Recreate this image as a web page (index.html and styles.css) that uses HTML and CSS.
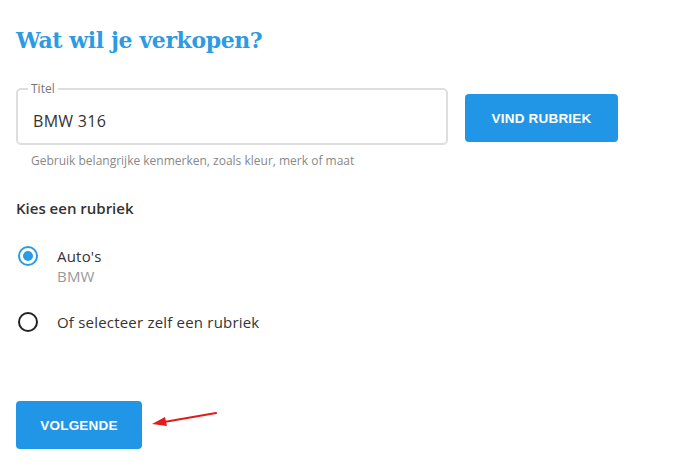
FILE: index.html
```html
<!DOCTYPE html>
<html lang="nl">
<head>
    <meta charset="UTF-8">
    <meta name="viewport" content="width=device-width, initial-scale=1.0">
    <title>Wat wil je verkopen?</title>
    <link rel="stylesheet" href="styles.css">
</head>
<body>
    <h1 class="titel">Wat wil je verkopen?</h1>

    <!-- Titel van de advertentie -->
    <div class="zoek-rij">
        <div class="veld">
            <fieldset class="kader">
                <legend>Titel</legend>
                <input type="text" id="titel" value="BMW 316">
            </fieldset>
            <p class="hint">Gebruik belangrijke kenmerken, zoals kleur, merk of maat</p>
        </div>
        <button class="knop knop-vind" type="button">VIND RUBRIEK</button>
    </div>

    <h2 class="subkop">Kies een rubriek</h2>

    <label class="keuze">
        <span class="rondje actief"></span>
        <span class="keuze-tekst">Auto's<span class="sub">BMW</span></span>
    </label>

    <label class="keuze keuze-tweede">
        <span class="rondje"></span>
        <span class="keuze-tekst">Of selecteer zelf een rubriek</span>
    </label>

    <div class="voet">
        <button class="knop knop-volgende" type="button">VOLGENDE</button>
        <!-- rode pijl naar de knop -->
        <svg class="pijl" width="70" height="24" viewBox="0 0 70 24">
            <line x1="66" y1="3" x2="14" y2="12" stroke="#e21c1c" stroke-width="2.2" stroke-linecap="round"/>
            <polygon points="2,14 15,7 17,16" fill="#e21c1c"/>
        </svg>
    </div>
</body>
</html>
```

FILE: styles.css
```css
body {
    margin: 0;
    padding: 0 16px;
    font-family: 'Open Sans', 'Noto Sans', sans-serif;
    color: #333;
    background: #fff;
}

.titel {
    margin: 27px 0 0;
    font-family: 'DejaVu Serif', serif;
    font-size: 22px;
    font-weight: bold;
    color: #2d9be3;
    letter-spacing: -0.4px;
}

.zoek-rij {
    display: flex;
    align-items: flex-start;
    margin-top: 30px;
}

.veld {
    width: 432px;
}

.kader {
    margin: 0;
    padding: 0 15px 10px;
    border: 2px solid #dedede;
    border-radius: 5px;
    height: 48px;
}

.kader legend {
    padding: 0 3px;
    margin-left: -5px;
    font-size: 12px;
    color: #777;
    line-height: 12px;
}

.kader input {
    border: none;
    outline: none;
    padding: 0;
    margin-top: 15px;
    width: 100%;
    font-family: inherit;
    font-size: 16px;
    color: #333;
    letter-spacing: 0.3px;
}

.hint {
    margin: 7px 0 0 15px;
    font-size: 12px;
    color: #888;
}

.knop {
    border: none;
    border-radius: 4px;
    background: #2196e6;
    color: #fff;
    font-family: 'Liberation Sans', Arial, sans-serif;
    font-weight: bold;
    font-size: 13.5px;
    letter-spacing: 0.2px;
    cursor: pointer;
}

.knop-vind {
    width: 153px;
    height: 48px;
    margin: 11px 0 0 17px;
}

.subkop {
    margin: 29px 0 0;
    font-size: 15px;
    font-weight: 600;
    color: #333;
}

.keuze {
    display: flex;
    align-items: flex-start;
    margin-top: 28px;
    font-size: 15px;
    line-height: 20px;
    letter-spacing: 0.2px;
}

.keuze-tweede {
    margin-top: 26px;
}

.rondje {
    box-sizing: border-box;
    width: 20px;
    height: 20px;
    margin: 0 19px 0 2px;
    border: 2px solid #222;
    border-radius: 50%;
    position: relative;
    flex-shrink: 0;
}

.rondje.actief {
    border-color: #2d9be3;
}

.rondje.actief::after {
    content: '';
    position: absolute;
    left: 3px;
    top: 3px;
    width: 10px;
    height: 10px;
    border-radius: 50%;
    background: #2d9be3;
}

.keuze-tekst {
    display: flex;
    flex-direction: column;
}

.sub {
    color: #999;
}

.voet {
    display: flex;
    align-items: flex-start;
    margin-top: 69px;
}

.knop-volgende {
    width: 126px;
    height: 48px;
}

.pijl {
    margin: 9px 0 0 8px;
}
```
